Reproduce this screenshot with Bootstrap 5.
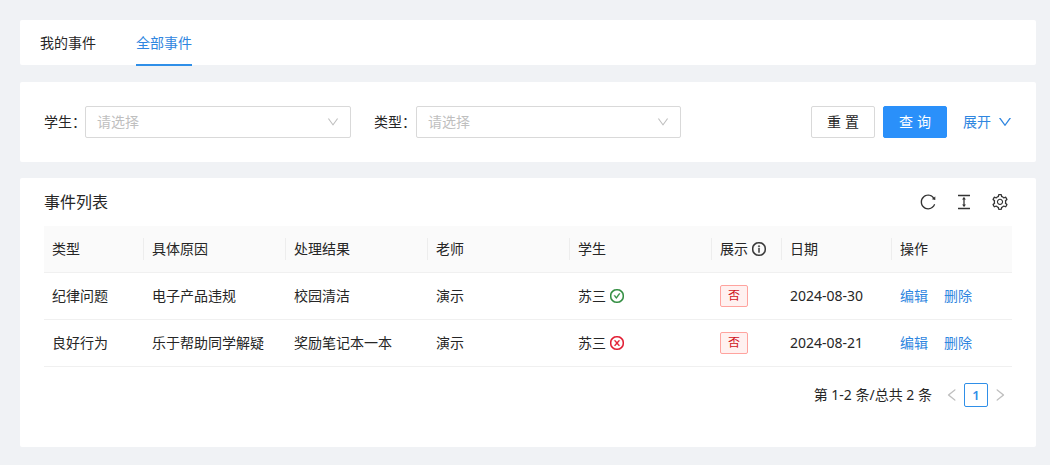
<!DOCTYPE html>
<html lang="zh-CN">
<head>
<meta charset="utf-8">
<title>事件</title>
<link href="https://cdn.jsdelivr.net/npm/bootstrap@5.3.0/dist/css/bootstrap.min.css" rel="stylesheet">
<style>
html,body{height:465px;overflow:hidden}
body{background:#f0f2f5;color:#262626;font-family:"Noto Sans","Noto Sans CJK SC",sans-serif;font-size:14px;line-height:20px;padding:20px 14px 18px 20px}
.panel{background:#fff;border-radius:2px}
.tabs-panel{height:45px;padding-left:20px;gap:40px;margin-bottom:17px}
.tab-item{height:46px;line-height:45px;color:#262626;text-decoration:none}
.tab-item.on{color:#2f86e0;border-bottom:2px solid #2f8fe8}
.filter-panel{height:80px;padding:0 24px;margin-bottom:16px}
.f-label{width:41px;white-space:nowrap}
.f-label2{width:42px;white-space:nowrap}
.f-select{width:266px;height:32px;border:1px solid #d9d9d9;border-radius:2px;padding:0 11px;color:#bfbfbf}
.f-select.second{width:265px}
.f-gap{width:23px}
.ico{fill:currentColor;flex:none;display:block}
.ico-sel{width:12px;height:12px;color:#bfbfbf}
.act-btn{width:64px;height:32px;border-radius:2px;font-size:14px;padding:0;line-height:30px;letter-spacing:4px;text-indent:4px;border:1px solid #d9d9d9;background:#fff;color:#262626}
.act-btn.pri{background:#2a90fa;border-color:#2a90fa;color:#fff;margin-left:8px}
.expand{color:#2f86e0;margin-left:16px;text-decoration:none;gap:7px}
.ico-exp{width:14px;height:14px;color:#2f86e0}
.list-panel{height:269px;padding:0 24px}
.list-head{height:48px}
.list-title{font-size:16px}
.tool-ic{gap:20px;margin-right:4px;color:#333}
.ico-tool{width:16px;height:16px}
.ev-table{width:968px;table-layout:fixed;border-collapse:collapse;margin:0}
.ev-table th{background:#fafafa;font-weight:400;height:46px;padding:0 8px;position:relative;border-bottom:1px solid #f0f0f0;vertical-align:middle}
.ev-table th+th::before{content:"";position:absolute;left:-1px;top:12px;height:22px;width:1px;background:#ededed}
.ev-table td{height:47px;padding:0 8px;border-bottom:1px solid #f0f0f0;vertical-align:middle}
.ico-14{width:14px;height:14px}
.ico-bold{stroke:currentColor;stroke-width:28px}
.ico-info{color:#333}
.ico-ok{color:#2e8b3d}
.ico-bad{color:#e0182d}
.no-tag{display:inline-block;width:28px;height:22px;line-height:20px;text-align:center;font-size:12px;background:#fff1f0;border:1px solid #ffa39e;border-radius:2px;color:#cf1322}
.op-link{color:#2f86e0;text-decoration:none;margin-right:16px}
.pager{height:57px}
.pg-num{width:24px;height:24px;border:1px solid #2f8fe8;border-radius:2px;color:#2f8fe8;text-align:center;line-height:22px;font-weight:600;font-size:13px}
.pg-total{margin-right:8px}
.pg-arrow{width:24px;height:24px;color:#bfbfbf}
</style>
</head>
<body>
<svg class="d-none" xmlns="http://www.w3.org/2000/svg">
  <symbol id="i-down" viewBox="64 64 896 896"><path d="M884 256h-75c-5.100 0-9.900 2.500-12.900 6.600L512 654.200 227.900 262.600c-3-4.100-7.800-6.600-12.900-6.600h-75c-6.500 0-10.300 7.400-6.500 12.700l352.600 486.100c12.800 17.600 39 17.600 51.700 0l352.600-486.100c3.900-5.300.1-12.700-6.400-12.700z"/></symbol>
  <symbol id="i-left" viewBox="64 64 896 896"><path d="M724 218.300V141c0-6.700-7.700-10.400-12.900-6.300L260.300 486.800a31.860 31.860 0 0 0 0 50.300l450.800 352.100c5.300 4.100 12.900.4 12.900-6.300v-77.300c0-4.900-2.300-9.600-6.100-12.600l-360-281 360-281.100c3.800-3 6.100-7.700 6.100-12.600z"/></symbol>
  <symbol id="i-right" viewBox="64 64 896 896"><path d="M765.700 486.800L314.900 134.700A7.970 7.970 0 0 0 302 141v77.300c0 4.900 2.300 9.600 6.100 12.600l360 281.100-360 281.100c-3.900 3-6.100 7.700-6.100 12.600V883c0 6.700 7.700 10.400 12.900 6.300l450.800-352.100a31.960 31.960 0 0 0 0-50.400z"/></symbol>
  <symbol id="i-reload" viewBox="64 64 896 896"><path d="M909.100 209.300l-56.400 44.100C775.800 155.100 656.200 92 521.900 92 290 92 102.300 279.500 102 511.500 101.700 743.700 289.800 932 521.900 932c181.300 0 335.800-115 394.600-276.100 1.500-4.200-.7-8.900-4.900-10.300l-56.700-19.500a8 8 0 0 0-10.100 4.800c-1.800 5-3.800 10-5.900 14.900-17.300 41-42.100 77.800-73.700 109.400A344.770 344.770 0 0 1 655.900 829c-42.300 17.900-87.400 27-133.800 27-46.500 0-91.500-9.100-133.800-27A341.500 341.500 0 0 1 279 755.200a342.160 342.160 0 0 1-73.700-109.400c-17.900-42.400-27-87.400-27-133.900s9.100-91.500 27-133.900c17.300-41 42.100-77.800 73.700-109.400 31.600-31.600 68.400-56.400 109.300-73.800 42.300-17.900 87.400-27 133.800-27 46.500 0 91.500 9.100 133.800 27a341.500 341.500 0 0 1 109.300 73.800c9.900 9.900 19.200 20.400 27.800 31.400l-60.200 47a8 8 0 0 0 3 14.100l175.600 43c5 1.200 9.900-2.600 9.900-7.700l.8-180.900c-.1-6.600-7.800-10.300-13-6.200z"/></symbol>
  <symbol id="i-height" viewBox="64 64 896 896"><path d="M840 836H184c-4.400 0-8 3.600-8 8v60c0 4.400 3.600 8 8 8h656c4.400 0 8-3.600 8-8v-60c0-4.400-3.600-8-8-8zm0-724H184c-4.400 0-8 3.600-8 8v60c0 4.400 3.600 8 8 8h656c4.400 0 8-3.600 8-8v-60c0-4.400-3.600-8-8-8zM610.800 378c6 0 9.400-7 5.700-11.700L515.700 238.700a7.140 7.140 0 0 0-11.300 0L403.600 366.300a7.230 7.230 0 0 0 5.700 11.700H476v268h-62.800c-6 0-9.400 7-5.700 11.700l100.800 127.500c2.900 3.700 8.500 3.700 11.300 0l100.800-127.500c3.700-4.700.4-11.700-5.700-11.700H548V378h62.800z"/></symbol>
  <symbol id="i-gear" viewBox="64 64 896 896"><path d="M924.800 625.700l-65.500-56c3.100-19 4.700-38.400 4.700-57.800s-1.600-38.800-4.700-57.800l65.500-56a32.030 32.030 0 0 0 9.300-35.200l-.9-2.600a443.740 443.740 0 0 0-79.700-137.900l-1.800-2.100a32.120 32.120 0 0 0-35.100-9.500l-81.300 28.900c-30-24.600-63.500-44-99.700-57.600l-15.700-85a32.050 32.050 0 0 0-25.800-25.700l-2.700-.5c-52.100-9.400-106.900-9.400-159 0l-2.700.5a32.050 32.050 0 0 0-25.800 25.700l-15.800 85.400a351.860 351.860 0 0 0-99 57.400l-81.900-29.100a32 32 0 0 0-35.100 9.500l-1.800 2.100a446.020 446.020 0 0 0-79.700 137.900l-.9 2.600c-4.500 12.500-.8 26.500 9.300 35.200l66.300 56.600c-3.100 18.800-4.600 38-4.600 57.100 0 19.200 1.500 38.400 4.600 57.100L99 625.500a32.030 32.030 0 0 0-9.300 35.200l.9 2.600c18.100 50.400 44.900 96.900 79.700 137.900l1.800 2.100a32.120 32.120 0 0 0 35.100 9.500l81.900-29.100c29.800 24.500 63.100 43.900 99 57.400l15.800 85.400a32.050 32.050 0 0 0 25.800 25.700l2.700.5a449.400 449.400 0 0 0 159 0l2.700-.5a32.050 32.050 0 0 0 25.800-25.700l15.700-85a350 350 0 0 0 99.700-57.600l81.300 28.900a32 32 0 0 0 35.100-9.500l1.800-2.100c34.800-41.100 61.600-87.500 79.700-137.900l.9-2.600c4.500-12.300.8-26.300-9.300-35zM788.300 465.900c2.500 15.100 3.800 30.600 3.800 46.100s-1.300 31-3.800 46.100l-6.600 40.100 74.700 63.900a370.030 370.030 0 0 1-42.600 73.600L721 702.800l-31.400 25.800c-23.900 19.600-50.500 35-79.300 45.800l-38.100 14.300-17.900 97a377.500 377.500 0 0 1-85 0l-17.900-97.200-37.800-14.500c-28.500-10.800-55-26.200-78.700-45.700l-31.400-25.900-93.400 33.200c-17-22.900-31.200-47.600-42.600-73.600l75.500-64.500-6.500-40c-2.400-14.900-3.700-30.300-3.700-45.500 0-15.300 1.200-30.600 3.700-45.500l6.500-40-75.500-64.500c11.300-26.100 25.600-50.700 42.600-73.600l93.400 33.200 31.400-25.900c23.700-19.500 50.200-34.900 78.700-45.700l37.900-14.300 17.900-97.200c28.100-3.200 56.800-3.200 85 0l17.900 97 38.100 14.300c28.700 10.800 55.400 26.200 79.300 45.800l31.400 25.800 92.800-32.900c17 22.900 31.200 47.600 42.600 73.600L781.800 426l6.500 39.900zM512 326c-97.200 0-176 78.800-176 176s78.800 176 176 176 176-78.800 176-176-78.800-176-176-176zm79.200 255.200A111.600 111.600 0 0 1 512 614c-29.900 0-58-11.700-79.200-32.800A111.600 111.600 0 0 1 400 502c0-29.900 11.700-58 32.800-79.200C454 401.600 482.100 390 512 390c29.900 0 58 11.600 79.200 32.800A111.600 111.600 0 0 1 624 502c0 29.900-11.700 58-32.800 79.200z"/></symbol>
  <symbol id="i-info" viewBox="64 64 896 896"><path d="M512 64C264.600 64 64 264.600 64 512s200.600 448 448 448 448-200.600 448-448S759.400 64 512 64zm0 820c-205.400 0-372-166.600-372-372s166.600-372 372-372 372 166.600 372 372-166.600 372-372 372z"/><path d="M464 336a48 48 0 1 0 96 0 48 48 0 1 0-96 0zm72 112h-48c-4.400 0-8 3.600-8 8v272c0 4.400 3.600 8 8 8h48c4.400 0 8-3.600 8-8V456c0-4.400-3.600-8-8-8z"/></symbol>
  <symbol id="i-ok" viewBox="64 64 896 896"><path d="M699 353h-46.900c-10.200 0-19.900 4.900-25.900 13.300L469 584.300l-71.200-98.800c-6-8.300-15.600-13.300-25.900-13.300H325c-6.500 0-10.300 7.400-6.500 12.700l124.600 172.800a31.800 31.800 0 0 0 51.700 0l210.600-292c3.900-5.300.1-12.700-6.400-12.700z"/><path d="M512 64C264.600 64 64 264.600 64 512s200.600 448 448 448 448-200.600 448-448S759.400 64 512 64zm0 820c-205.400 0-372-166.600-372-372s166.600-372 372-372 372 166.600 372 372-166.600 372-372 372z"/></symbol>
  <symbol id="i-bad" viewBox="64 64 896 896"><path d="M685.400 354.800c0-4.400-3.600-8-8-8l-66 .3L512 465.600l-99.300-118.400-66.100-.3c-4.400 0-8 3.500-8 8 0 1.900.7 3.700 1.900 5.200l130.100 155L340.500 670a8.320 8.320 0 0 0-1.900 5.200c0 4.400 3.600 8 8 8l66.100-.3L512 564.400l99.300 118.400 66 .3c4.400 0 8-3.500 8-8 0-1.900-.7-3.700-1.900-5.200L553.500 515l130.100-155c1.200-1.400 1.800-3.300 1.800-5.200z"/><path d="M512 64C264.600 64 64 264.600 64 512s200.600 448 448 448 448-200.600 448-448S759.400 64 512 64zm0 820c-205.400 0-372-166.600-372-372s166.600-372 372-372 372 166.600 372 372-166.600 372-372 372z"/></symbol>
</svg>
<div class="panel tabs-panel d-flex">
  <a class="tab-item" href="#">我的事件</a>
  <a class="tab-item on" href="#">全部事件</a>
</div>
<div class="panel filter-panel d-flex align-items-center">
  <span class="f-label">学生：</span>
  <div class="f-select d-flex align-items-center justify-content-between"><span>请选择</span>
    <svg class="ico ico-sel"><use href="#i-down"/></svg></div>
  <span class="f-gap"></span>
  <span class="f-label2">类型：</span>
  <div class="f-select second d-flex align-items-center justify-content-between"><span>请选择</span>
    <svg class="ico ico-sel"><use href="#i-down"/></svg></div>
  <div class="ms-auto d-flex align-items-center">
    <button class="btn act-btn" type="button">重置</button>
    <button class="btn act-btn pri" type="button">查询</button>
    <a class="expand d-flex align-items-center" href="#">展开
      <svg class="ico ico-exp"><use href="#i-down"/></svg></a>
  </div>
</div>
<div class="panel list-panel">
  <div class="list-head d-flex align-items-center justify-content-between">
    <span class="list-title">事件列表</span>
    <div class="tool-ic d-flex align-items-center">
      <svg class="ico ico-tool"><use href="#i-reload"/></svg>
      <svg class="ico ico-tool"><use href="#i-height"/></svg>
      <svg class="ico ico-tool"><use href="#i-gear"/></svg>
    </div>
  </div>
  <table class="ev-table">
    <colgroup><col style="width:100px"><col style="width:142px"><col style="width:142px"><col style="width:142px"><col style="width:142px"><col style="width:70px"><col style="width:110px"><col style="width:120px"></colgroup>
    <thead><tr>
      <th>类型</th><th>具体原因</th><th>处理结果</th><th>老师</th><th>学生</th>
      <th><span class="d-inline-flex align-items-center gap-1">展示
        <svg class="ico ico-14 ico-bold ico-info"><use href="#i-info"/></svg></span></th>
      <th>日期</th><th>操作</th>
    </tr></thead>
    <tbody>
      <tr>
        <td>纪律问题</td><td>电子产品违规</td><td>校园清洁</td><td>演示</td>
        <td><span class="d-inline-flex align-items-center gap-1">苏三
          <svg class="ico ico-14 ico-bold ico-ok"><use href="#i-ok"/></svg></span></td>
        <td><span class="no-tag">否</span></td><td>2024-08-30</td>
        <td><a class="op-link" href="#">编辑</a><a class="op-link" href="#">删除</a></td>
      </tr>
      <tr>
        <td>良好行为</td><td>乐于帮助同学解疑</td><td>奖励笔记本一本</td><td>演示</td>
        <td><span class="d-inline-flex align-items-center gap-1">苏三
          <svg class="ico ico-14 ico-bold ico-bad"><use href="#i-bad"/></svg></span></td>
        <td><span class="no-tag">否</span></td><td>2024-08-21</td>
        <td><a class="op-link" href="#">编辑</a><a class="op-link" href="#">删除</a></td>
      </tr>
    </tbody>
  </table>
  <div class="pager d-flex align-items-center justify-content-end">
    <span class="pg-total">第 1-2 条/总共 2 条</span>
    <span class="pg-arrow d-flex align-items-center justify-content-center"><svg class="ico ico-14"><use href="#i-left"/></svg></span>
    <span class="pg-num">1</span>
    <span class="pg-arrow d-flex align-items-center justify-content-center"><svg class="ico ico-14"><use href="#i-right"/></svg></span>
  </div>
</div>
</body>
</html>
